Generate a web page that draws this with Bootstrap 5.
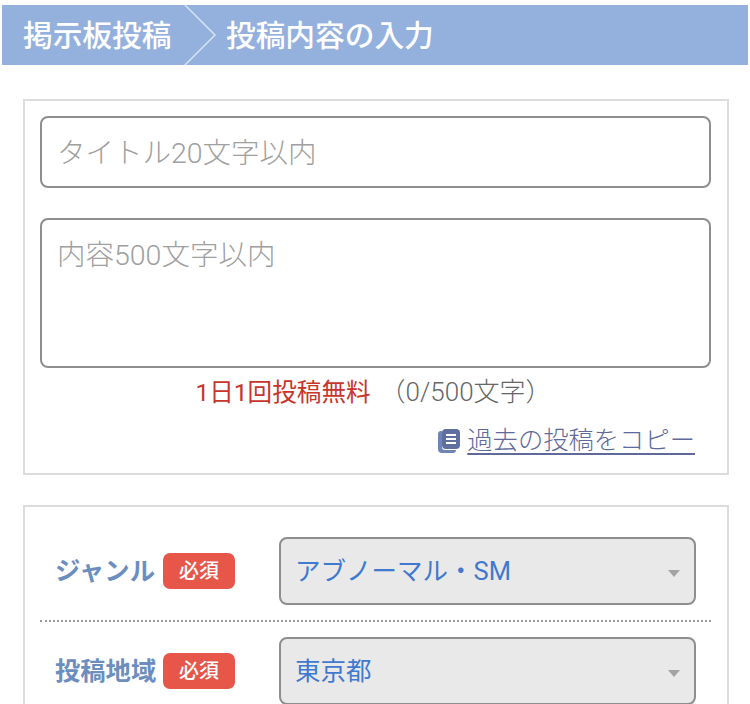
<!DOCTYPE html>
<html lang="ja">
<head>
<meta charset="utf-8">
<title>投稿内容の入力</title>
<link rel="stylesheet" href="https://cdn.jsdelivr.net/npm/bootstrap@5.3.0/dist/css/bootstrap.min.css">
<style>
html,body{height:704px;overflow:hidden;background:#fff}
body{font-family:"Liberation Sans","Noto Sans CJK JP",sans-serif;padding-top:5px}
.crumb-bar{margin:0 2px;height:60px;background:#94b1de;color:#fff;font-size:29.7px;font-weight:500;line-height:62px;position:relative;overflow:hidden}
.crumb-first{width:180px;padding-left:21px}
.crumb-second{padding-left:44px}
.crumb-arrow{position:absolute;left:178px;top:0}
.panel-box{border:2px solid #dcdcdc;margin:0 21px 30px 23px;background:#fff}
.panel-top{height:376px;padding:15px 16px 0 15px}
.field-box{display:block;width:100%;border:2px solid #8e8e8e;border-radius:8px;padding:0 15px;font-family:Roboto,"Noto Sans CJK JP",sans-serif;font-size:28.5px;font-weight:300;color:#a0a0a0;background:#fff}
.field-title{height:72px;line-height:71px;margin-bottom:30px}
.field-body{height:150px;padding-top:14px;line-height:44px}
.count-row{font-family:Roboto,"Noto Sans CJK JP",sans-serif;font-size:24.6px;line-height:32px;margin-top:8px;padding-right:4px}
.count-free{color:#c9342b}
.count-used{color:#666;font-size:26px;font-weight:300;margin-left:9px}
.copy-row{margin-top:14px;padding-right:16px;font-size:25.3px;font-weight:300;line-height:34px}
.copy-row a{color:#5f6a9b;text-decoration:underline;text-underline-offset:4px}
.panel-bottom{padding:30px 30px 0 15px;height:260px}
.form-line{height:68px}
.form-label-text{width:115px;padding-left:15px;font-size:25.3px;font-weight:700;color:#6c8ebf;white-space:nowrap;line-height:40px}
.req-tag{width:72px;height:36px;background:#e6574a;border-radius:7px;color:#fff;font-size:20px;font-weight:500;line-height:36px;text-align:center;margin-left:8px}
.pick-box{margin-left:44px;width:417px;height:68px;border:2px solid #8e8e8e;border-radius:8px;background:#e9e9e9;color:#3f7ad0;font-family:Roboto,"Noto Sans CJK JP",sans-serif;font-size:25.5px;padding:0 14px;line-height:65px;position:relative}
.pick-arrow{position:absolute;right:14px;top:31px;width:0;height:0;border-left:6.5px solid transparent;border-right:6.5px solid transparent;border-top:7px solid #a3a3a3}
.dot-line{border-top:2px dotted #9a9a9a;margin:15px -14px 15px 0}
.copy-gap{gap:7px}
</style>
</head>
<body>
<div class="crumb-bar d-flex">
  <div class="crumb-first">掲示板投稿</div>
  <div class="crumb-second">投稿内容の入力</div>
  <svg class="crumb-arrow" width="40" height="60" viewBox="0 0 40 60"><path d="M4 -1 L35 30 L4 61" fill="none" stroke="#dbe6f6" stroke-width="1.4"/></svg>
</div>
<div style="height:34px"></div>
<div class="panel-box panel-top">
  <div class="field-box field-title">タイトル20文字以内</div>
  <div class="field-box field-body">内容500文字以内</div>
  <div class="count-row text-center"><span class="count-free">1日1回投稿無料</span><span class="count-used">（0/500文字）</span></div>
  <div class="copy-row copy-gap d-flex justify-content-end align-items-center">
    <svg width="22" height="25" viewBox="0 0 22 25"><path d="M4 3 H3 Q0 3 0 6 V21 Q0 25 4 25 H15 Q18 25 18 22 H7 Q4 22 4 19 Z" fill="#6f85b5"/><rect x="4" y="1" width="18" height="20" rx="4" fill="#5f6f9f"/><path d="M8 7 H18 M8 11 H18 M8 15 H18" stroke="#fff" stroke-width="1.8"/></svg>
    <a href="#">過去の投稿をコピー</a>
  </div>
</div>
<div class="panel-box panel-bottom">
  <div class="form-line d-flex align-items-center">
    <div class="form-label-text">ジャンル</div>
    <div class="req-tag">必須</div>
    <div class="pick-box">アブノーマル・SM<span class="pick-arrow"></span></div>
  </div>
  <div class="dot-line"></div>
  <div class="form-line d-flex align-items-center">
    <div class="form-label-text">投稿地域</div>
    <div class="req-tag">必須</div>
    <div class="pick-box">東京都<span class="pick-arrow"></span></div>
  </div>
</div>
<script src="https://cdn.jsdelivr.net/npm/bootstrap@5.3.0/dist/js/bootstrap.bundle.min.js"></script>
</body>
</html>
